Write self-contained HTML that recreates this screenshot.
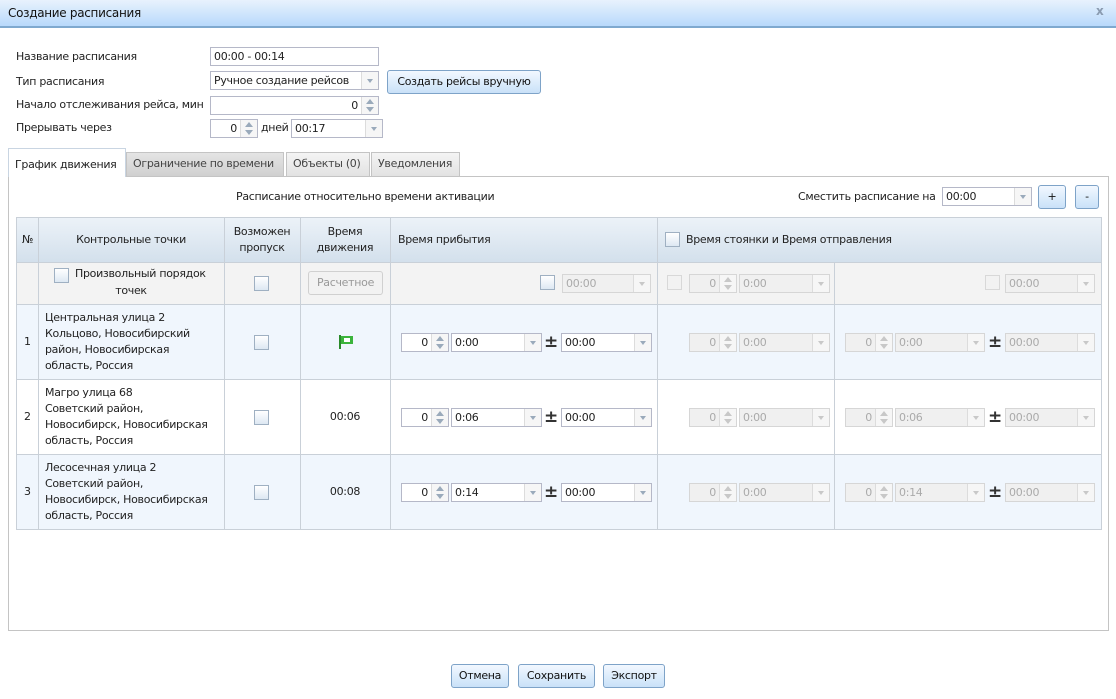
<!DOCTYPE html>
<html><head><meta charset="utf-8">
<style>
*{margin:0;padding:0;box-sizing:border-box}
body{width:1116px;height:699px;position:relative;background:#fff;font-family:"DejaVu Sans","Liberation Sans",sans-serif;font-size:11px;letter-spacing:-0.3px;color:#222;overflow:hidden}
.a{position:absolute;white-space:nowrap}
.hdr{left:0;top:0;width:1116px;height:28px;background:linear-gradient(#e8f2fd,#b8d9fb);border-bottom:2px solid #7fa9cf}
.f{position:absolute;height:19px;border:1px solid #b5b8c8;background:#fff;line-height:17px;padding:0 3px;white-space:nowrap;color:#222}
.f.d{background:#f0f0f0;border-color:#d6d6d6;color:#aaa}
.sel b{position:absolute;right:0;top:0;width:17px;height:17px;border-left:1px solid #dcdcdc;background:#f6f6f6}
.sel b:after{content:"";position:absolute;left:5px;top:7px;border-left:3.5px solid transparent;border-right:3.5px solid transparent;border-top:4px solid #9aaabb}
.sp{text-align:right;padding-right:20px}
.sp b{position:absolute;right:0;top:0;width:17px;height:17px;background:#f6f6f6;border-left:1px solid #dcdcdc}
.sp b:before{content:"";position:absolute;left:4px;top:2px;border-left:4px solid transparent;border-right:4px solid transparent;border-bottom:5px solid #9aaabb}
.sp b:after{content:"";position:absolute;left:4px;top:10px;border-left:4px solid transparent;border-right:4px solid transparent;border-top:5px solid #9aaabb}
.d b:before{border-bottom-color:#c8c8c8}.d b:after{border-top-color:#c8c8c8}
.d.sel b:after{border-top-color:#c8c8c8}
.cb{position:absolute;width:15px;height:15px;border:1px solid #9fb0c2;background:linear-gradient(#fff,#dde8f3)}
.cb.d{border-color:#d8d8d8;background:#f2f2f2}
.btn{position:absolute;height:24px;border:1px solid #7ea3c8;border-radius:3px;background:linear-gradient(#f2f8ff,#c9e1f8);text-align:center;line-height:22px;color:#111;white-space:nowrap}
.tab{position:absolute;top:152px;height:24px;border:1px solid #c4c4c4;border-bottom:none;background:linear-gradient(#f4f4f4,#e2e2e2);line-height:22px;padding:0 6px;color:#444;white-space:nowrap;overflow:hidden}
.vl{position:absolute;width:1px;background:#c9d0d8}
.hl{position:absolute;height:1px;background:#c9d0d8;left:16px;width:1086px}
.pm{position:absolute;font-size:17px;font-weight:bold;color:#333;line-height:16px}
.c{text-align:center}
</style></head><body>
<div class="a hdr"></div>
<div class="a" style="left:8px;top:6px;font-size:12px;color:#111">Создание расписания</div>
<div class="a" style="left:1096px;top:4px;color:#8a9bb0;font-weight:bold;font-size:12px">x</div>

<div class="a" style="left:16px;top:50px">Название расписания</div>
<div class="a" style="left:16px;top:75px">Тип расписания</div>
<div class="a" style="left:16px;top:98px">Начало отслеживания рейса, мин</div>
<div class="a" style="left:16px;top:121px">Прерывать через</div>

<div class="f" style="left:210px;top:47px;width:169px">00:00 - 00:14</div>
<div class="f sel" style="left:210px;top:71px;width:169px">Ручное создание рейсов<b></b></div>
<div class="btn" style="left:387px;top:70px;width:154px">Создать рейсы вручную</div>
<div class="f sp" style="left:210px;top:96px;width:169px">0<b></b></div>
<div class="f sp" style="left:210px;top:119px;width:48px">0<b></b></div>
<div class="a" style="left:261px;top:121px">дней</div>
<div class="f sel" style="left:291px;top:119px;width:92px">00:17<b></b></div>

<div class="a" style="left:8px;top:176px;width:1101px;height:455px;border:1px solid #c4c4c4"></div>
<div class="tab" style="left:8px;top:148px;height:29px;width:118px;background:#fff;line-height:32px;color:#222;border-color:#c9d5e2">График движения</div>
<div class="tab" style="left:126px;width:158px;background:linear-gradient(#e4e4e4,#d0d0d0)">Ограничение по времени</div>
<div class="tab" style="left:286px;width:84px">Объекты (0)</div>
<div class="tab" style="left:371px;width:89px">Уведомления</div>

<div class="a" style="left:236px;top:190px">Расписание относительно времени активации</div>
<div class="a" style="left:798px;top:190px">Сместить расписание на</div>
<div class="f sel" style="left:942px;top:187px;width:90px">00:00<b></b></div>
<div class="btn" style="left:1038px;top:185px;width:28px">+</div>
<div class="btn" style="left:1075px;top:185px;width:24px">-</div>

<!-- table -->
<div class="a" style="left:16px;top:218px;width:1086px;height:44px;background:linear-gradient(#ecf2f8,#d3e0ec)"></div>
<div class="a" style="left:16px;top:262px;width:1086px;height:42px;background:#f3f3f3"></div>
<div class="a" style="left:16px;top:304px;width:1086px;height:75px;background:#f0f6fd"></div>
<div class="a" style="left:16px;top:379px;width:1086px;height:75px;background:#fff"></div>
<div class="a" style="left:16px;top:454px;width:1086px;height:75px;background:#f0f6fd"></div>
<div class="hl" style="top:217px"></div><div class="hl" style="top:262px"></div><div class="hl" style="top:304px"></div><div class="hl" style="top:379px"></div><div class="hl" style="top:454px"></div><div class="hl" style="top:529px"></div>
<div class="vl" style="left:16px;top:217px;height:313px"></div>
<div class="vl" style="left:38px;top:217px;height:313px"></div>
<div class="vl" style="left:224px;top:217px;height:313px"></div>
<div class="vl" style="left:300px;top:217px;height:313px"></div>
<div class="vl" style="left:390px;top:217px;height:313px"></div>
<div class="vl" style="left:657px;top:217px;height:313px"></div>
<div class="vl" style="left:834px;top:262px;height:268px"></div>
<div class="vl" style="left:1101px;top:217px;height:313px"></div>

<div class="a" style="left:22px;top:233px">№</div>
<div class="a c" style="left:38px;top:233px;width:186px">Контрольные точки</div>
<div class="a c" style="left:224px;top:224px;width:76px;line-height:16px">Возможен<br>пропуск</div>
<div class="a c" style="left:300px;top:224px;width:90px;line-height:16px">Время<br>движения</div>
<div class="a" style="left:398px;top:233px">Время прибытия</div>
<div class="cb" style="left:665px;top:232px"></div>
<div class="a" style="left:686px;top:233px">Время стоянки и Время отправления</div>

<!-- row0 -->
<div class="cb" style="left:54px;top:268px"></div>
<div class="a" style="left:75px;top:267px">Произвольный порядок</div>
<div class="a c" style="left:38px;top:284px;width:186px">точек</div>
<div class="cb" style="left:254px;top:276px"></div>
<div class="btn" style="left:308px;top:271px;width:75px;border-color:#d0d0d0;background:#f2f2f2;color:#999;height:24px">Расчетное</div>
<div class="cb" style="left:540px;top:275px"></div>
<div class="f sel d" style="left:562px;top:274px;width:89px">00:00<b></b></div>
<div class="cb d" style="left:667px;top:275px"></div>
<div class="f sp d" style="left:689px;top:274px;width:48px">0<b></b></div>
<div class="f sel d" style="left:739px;top:274px;width:91px">0:00<b></b></div>
<div class="cb d" style="left:985px;top:275px"></div>
<div class="f sel d" style="left:1005px;top:274px;width:90px">00:00<b></b></div>

<!-- rows -->
<div class="a" style="left:24px;top:335px">1</div>
<div class="a" style="left:45px;top:310px;line-height:16px">Центральная улица 2<br>Кольцово, Новосибирский<br>район, Новосибирская<br>область, Россия</div>
<div class="cb" style="left:254px;top:335px"></div>
<svg class="a" style="left:338px;top:335px" width="18" height="16" viewBox="0 0 18 16"><rect x="1" y="0" width="2" height="14" fill="#2a8a2a"/><rect x="3" y="1" width="12" height="8" fill="#3cb43c"/><rect x="6" y="3" width="6" height="4" fill="#fff"/></svg>

<div class="a" style="left:24px;top:410px">2</div>
<div class="a" style="left:45px;top:385px;line-height:16px">Магро улица 68<br>Советский район,<br>Новосибирск, Новосибирская<br>область, Россия</div>
<div class="cb" style="left:254px;top:410px"></div>
<div class="a c" style="left:300px;top:410px;width:90px">00:06</div>

<div class="a" style="left:24px;top:485px">3</div>
<div class="a" style="left:45px;top:460px;line-height:16px">Лесосечная улица 2<br>Советский район,<br>Новосибирск, Новосибирская<br>область, Россия</div>
<div class="cb" style="left:254px;top:485px"></div>
<div class="a c" style="left:300px;top:485px;width:90px">00:08</div>

<!-- row1 inputs -->
<div class="f sp" style="left:401px;top:333px;width:48px">0<b></b></div>
<div class="f sel" style="left:451px;top:333px;width:91px">0:00<b></b></div>
<div class="pm" style="left:544px;top:334px">±</div>
<div class="f sel" style="left:561px;top:333px;width:91px">00:00<b></b></div>
<div class="f sp d" style="left:689px;top:333px;width:48px">0<b></b></div>
<div class="f sel d" style="left:739px;top:333px;width:91px">0:00<b></b></div>
<div class="f sp d" style="left:845px;top:333px;width:48px">0<b></b></div>
<div class="f sel d" style="left:895px;top:333px;width:90px">0:00<b></b></div>
<div class="pm" style="left:988px;top:334px">±</div>
<div class="f sel d" style="left:1005px;top:333px;width:90px">00:00<b></b></div>
<!-- row2 -->
<div class="f sp" style="left:401px;top:408px;width:48px">0<b></b></div>
<div class="f sel" style="left:451px;top:408px;width:91px">0:06<b></b></div>
<div class="pm" style="left:544px;top:409px">±</div>
<div class="f sel" style="left:561px;top:408px;width:91px">00:00<b></b></div>
<div class="f sp d" style="left:689px;top:408px;width:48px">0<b></b></div>
<div class="f sel d" style="left:739px;top:408px;width:91px">0:00<b></b></div>
<div class="f sp d" style="left:845px;top:408px;width:48px">0<b></b></div>
<div class="f sel d" style="left:895px;top:408px;width:90px">0:06<b></b></div>
<div class="pm" style="left:988px;top:409px">±</div>
<div class="f sel d" style="left:1005px;top:408px;width:90px">00:00<b></b></div>
<!-- row3 -->
<div class="f sp" style="left:401px;top:483px;width:48px">0<b></b></div>
<div class="f sel" style="left:451px;top:483px;width:91px">0:14<b></b></div>
<div class="pm" style="left:544px;top:484px">±</div>
<div class="f sel" style="left:561px;top:483px;width:91px">00:00<b></b></div>
<div class="f sp d" style="left:689px;top:483px;width:48px">0<b></b></div>
<div class="f sel d" style="left:739px;top:483px;width:91px">0:00<b></b></div>
<div class="f sp d" style="left:845px;top:483px;width:48px">0<b></b></div>
<div class="f sel d" style="left:895px;top:483px;width:90px">0:14<b></b></div>
<div class="pm" style="left:988px;top:484px">±</div>
<div class="f sel d" style="left:1005px;top:483px;width:90px">00:00<b></b></div>

<div class="btn" style="left:451px;top:664px;width:58px">Отмена</div>
<div class="btn" style="left:518px;top:664px;width:77px">Сохранить</div>
<div class="btn" style="left:603px;top:664px;width:62px">Экспорт</div>
</body></html>
